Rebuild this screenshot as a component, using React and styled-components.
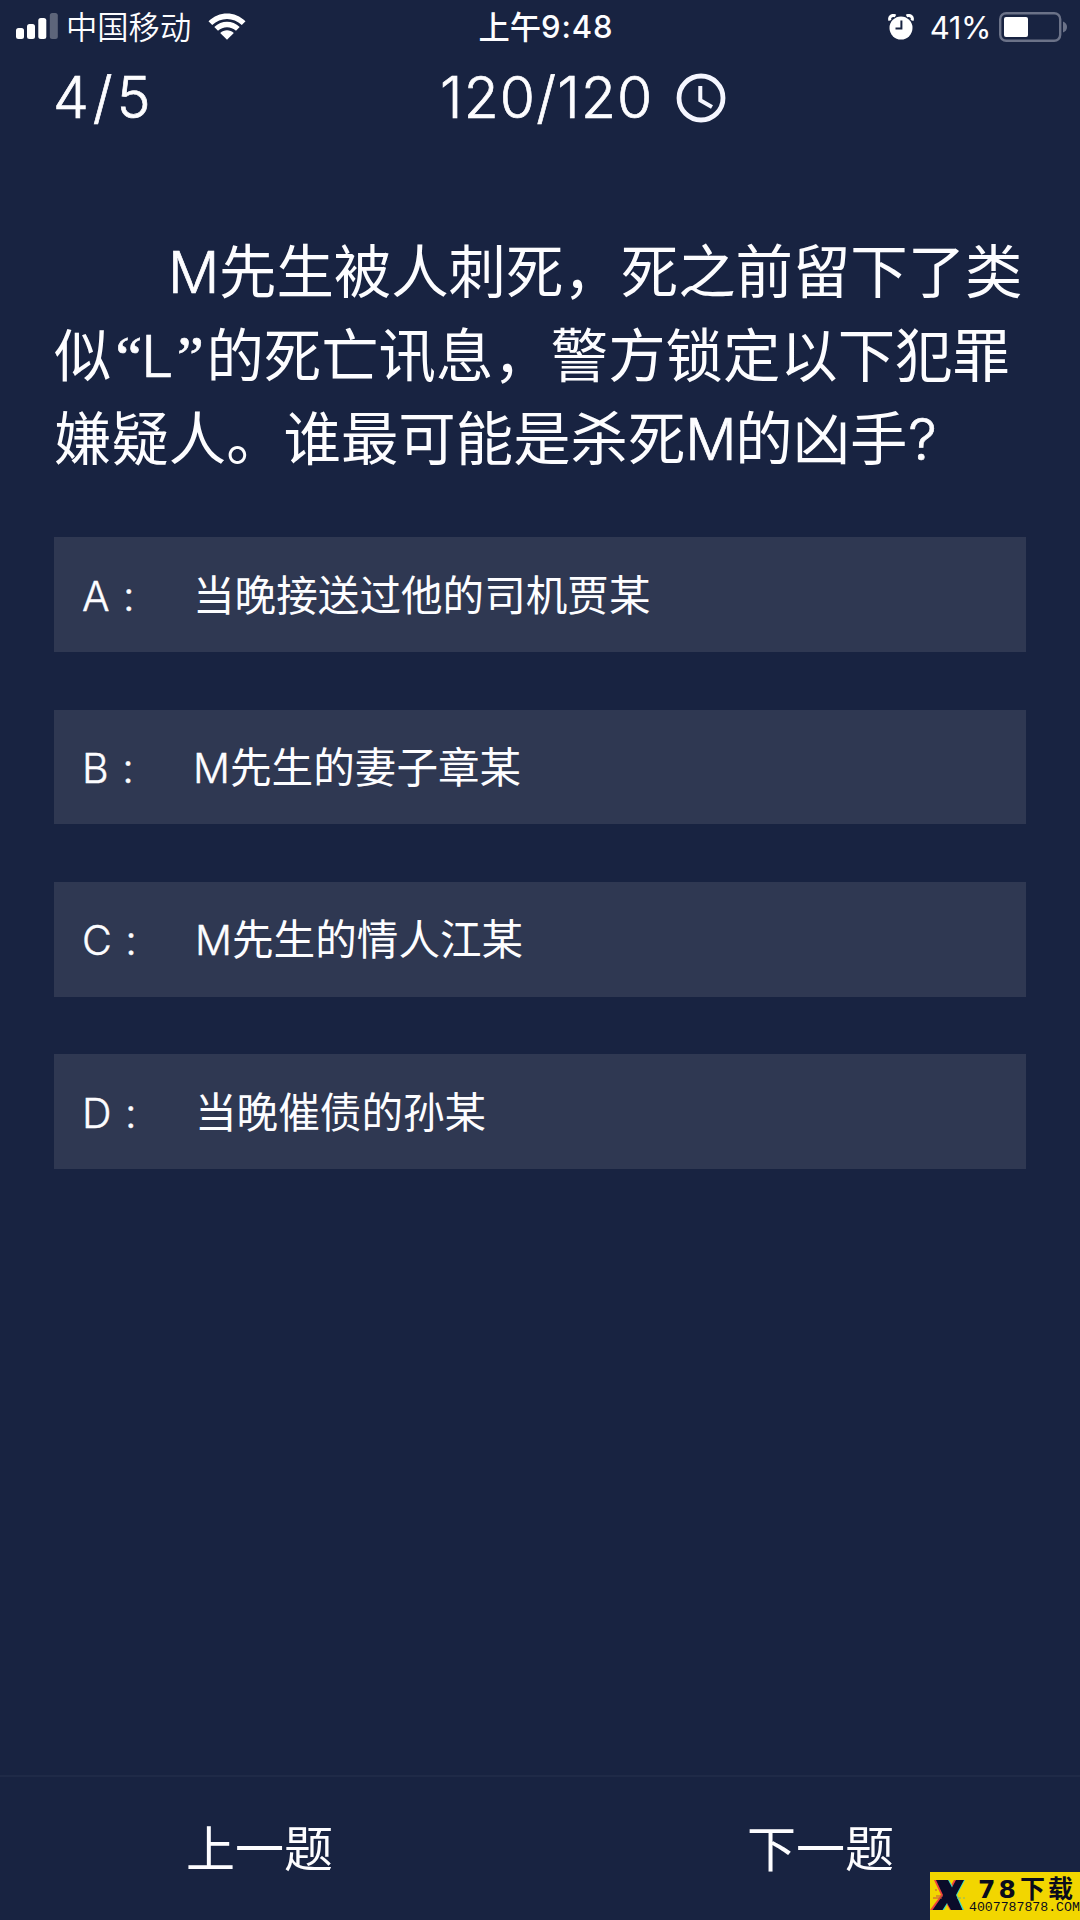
import React from 'react';
import styled, { createGlobalStyle } from 'styled-components';

const latin = `Inter, "Noto Sans CJK SC", sans-serif`;
const cjk = `"Noto Sans CJK SC", sans-serif`;

const GlobalStyle = createGlobalStyle`
  * { box-sizing: border-box; }
  body { margin: 0; background: #182341; }
`;

const Screen = styled.main`
  position: relative;
  display: flex;
  flex-direction: column;
  width: 1080px;
  height: 1920px;
  overflow: hidden;
  background: #182341;
  color: #fdfdff;
  font-family: ${latin};
  font-weight: 400;
`;

const StatusBar = styled.header`
  display: grid;
  grid-template-columns: 1fr auto 1fr;
  align-items: center;
  height: 54px;
  padding: 0 13px 0 16px;
  font-size: 31px;
`;

const StatusGroup = styled.div`
  display: flex;
  align-items: center;
  justify-content: ${(p) => (p.$end ? 'flex-end' : 'flex-start')};
`;

const Carrier = styled.span`
  margin: 0 17px 0 7px;
  padding-bottom: 2px;
  font: 350 31.3px/52px ${cjk};
`;

const Time = styled.time`
  display: flex;
  margin-left: 9px;
  font-weight: 500;
  line-height: 54px;
  letter-spacing: 0.9px;
`;

const TimePrefix = styled.span`
  padding-bottom: 2px;
  font: 500 31.3px/52px ${cjk};
  letter-spacing: 0;
`;

const Percent = styled.span`
  margin: 0 8px 0 16px;
  font-size: 31px;
  font-weight: 400;
  letter-spacing: -0.4px;
`;

const Progress = styled.section`
  display: flex;
  align-items: center;
  height: 87px;
  padding-left: 53px;
  font-size: 57px;
  font-weight: 300;
  line-height: 87px;
  -webkit-text-stroke: 0.7px #fdfdff;
`;

const Counter = styled.span`
  width: 387px;
  letter-spacing: 4px;
`;

const Remaining = styled.span`
  width: 236px;
  letter-spacing: 1.2px;
`;

const Question = styled.h1`
  margin: 86px 54px 0;
  font: 400 57.4px/83.7px ${cjk};
  white-space: nowrap;
`;

const QuestionLine = styled.span`
  display: block;
  height: 83.7px;
  padding-left: ${(p) => (p.$indent ? '114px' : '0')};
`;

const Latin = styled.span`
  display: inline-block;
  width: ${(p) => p.$width}px;
  font-family: ${latin};
  font-size: 57px;
  font-weight: 300;
  line-height: 1;
  text-align: center;
  -webkit-text-stroke: 0.7px #fdfdff;
`;

const Quote = styled(Latin)`
  padding-left: ${(p) => p.$shift || 0}px;
  font-family: "Liberation Serif", serif;
  font-size: 60px;
  font-weight: 400;
`;

const Options = styled.ul`
  display: flex;
  flex-direction: column;
  gap: 57.5px;
  margin: 59.2px 54px 0;
  padding: 0;
  list-style: none;
`;

const Option = styled.li`
  display: flex;
  align-items: baseline;
  height: 114.8px;
  padding: 25.6px 0 0 28px;
  background: #2f3852;
  font: 400 41.6px/60px ${cjk};
  white-space: nowrap;
`;

const Label = styled.span`
  display: flex;
  gap: 13.5px;
  width: ${(p) => p.$width}px;
  font-family: ${latin};
  font-size: 41px;
  font-weight: 300;
  -webkit-text-stroke: 0.4px #fdfdff;
`;

const OptionLatin = styled.span`
  width: 37px;
  font-family: ${latin};
  font-size: 41px;
  font-weight: 300;
  -webkit-text-stroke: 0.4px #fdfdff;
`;

const Footer = styled.nav`
  display: flex;
  align-items: center;
  justify-content: space-between;
  height: 145px;
  margin-top: auto;
  padding: 0 186px 5px;
  border-top: 2px solid #1f2a47;
`;

const NavButton = styled.button`
  padding: 0;
  border: 0;
  background: none;
  color: inherit;
  font: 400 49px/72px ${cjk};
`;

const Watermark = styled.aside`
  position: absolute;
  right: 0;
  bottom: 0;
  display: flex;
  width: 150px;
  height: 48px;
  background: #f2d600;
  color: #0a0c1c;
`;

const Brand = styled.div`
  display: flex;
  flex-direction: column;
  padding-top: 5px;
`;

const BrandName = styled.div`
  display: flex;
  align-items: center;
  height: 24px;
  padding-left: 9px;
  font: 700 25px/23px "Liberation Sans", ${cjk};
  letter-spacing: 3px;
`;

const BrandNumber = styled.span`
  width: 42px;
  font: 700 25px/23px "DejaVu Sans", sans-serif;
  letter-spacing: 3px;
`;

const BrandUrl = styled.div`
  font: 400 13.2px/14px "Liberation Mono", monospace;
  white-space: nowrap;
`;

const SignalIcon = () => (
  <svg width="43" height="28" viewBox="0 0 43 28" fill="#fff">
    <rect x="0" y="15" width="8" height="11" rx="2.5" />
    <rect x="11" y="11" width="8" height="15" rx="2.5" />
    <rect x="22.3" y="5" width="8" height="21" rx="2.5" />
    <rect x="33.8" y="0" width="8" height="26" rx="2.5" opacity="0.3" />
  </svg>
);

const WifiIcon = () => (
  <svg width="38" height="28" viewBox="0 0 38 28" fill="#fff">
    <path d="M0.5 8.2C11-2.2 27-2.2 37.5 8.2L33.8 12C25.5 4 12.500 4 4.200 12Z" />
    <path d="M6.300 14.100C13.500 7 24.500 7 31.700 14.100L28 17.800C23 13 15 13 10 17.800Z" />
    <path d="M12.200 20C16 16.400 22 16.400 25.800 20L19 26.700Z" />
  </svg>
);

const AlarmIcon = () => (
  <svg width="26" height="26" viewBox="0 0 26 26">
    <path d="M2 6.500C.5 3 4 .2 7.500 2M24 6.500C25.500 3 22 .2 18.500 2" fill="none" stroke="#fff" strokeWidth="3" />
    <circle cx="13" cy="14" r="11.500" fill="#fff" />
    <path d="M13.400 6.500V14.500H7.500" fill="none" stroke="#182341" strokeWidth="2" />
  </svg>
);

const BatteryIcon = () => (
  <svg width="68" height="30" viewBox="0 0 68 30">
    <rect x="1.200" y="1.200" width="60" height="27.600" rx="6" fill="none" stroke="#6b7288" strokeWidth="2.400" />
    <rect x="5" y="5" width="24" height="20" rx="2" fill="#fff" />
    <path d="M64 9.500Q68 11 68 15Q68 19 64 20.500Z" fill="#6b7288" />
  </svg>
);

const ClockIcon = () => (
  <svg width="50" height="50" viewBox="0 0 50 50" fill="none" stroke="#f5f6ff">
    <circle cx="25" cy="25" r="22" strokeWidth="4.800" />
    <path d="M24.300 13V27.300L36 34" strokeWidth="4" />
  </svg>
);

const GlitchX = () => (
  <svg width="39" height="48" viewBox="0 0 39 48">
    <path d="M4 8H16L20 15L24 8H33L24 23L31 38H20L16 31L11 38H0L11 23Z" fill="#f0443e" />
    <path d="M8 8H19L23 15L27 8H35L27 23L34 38H22L18 31L14 38H5L14 23Z" fill="#36dcc4" />
    <path d="M6 8H18L22 15.500L26 8H34L26 23L32.500 38H21L17 31L12.500 38H2.500L13 23Z" fill="#0a0c2a" />
    <path d="M3 26H12M6 24H13M5 18H7" stroke="#c8503c" strokeWidth="1.200" />
    <path d="M27 26H31M33 26H35" stroke="#7fb87a" strokeWidth="1.200" />
  </svg>
);

const options = [
  { key: 'A', width: 111, text: '当晚接送过他的司机贾某' },
  { key: 'B', width: 111, latin: 'M', text: '先生的妻子章某' },
  { key: 'C', width: 113, latin: 'M', text: '先生的情人江某' },
  { key: 'D', width: 113, text: '当晚催债的孙某' },
];

export default function App() {
  return (
    <>
      <GlobalStyle />
      <Screen>
        <StatusBar>
          <StatusGroup>
            <SignalIcon />
            <Carrier>中国移动</Carrier>
            <WifiIcon />
          </StatusGroup>
          <Time>
            <TimePrefix>上午</TimePrefix>9:48
          </Time>
          <StatusGroup $end>
            <AlarmIcon />
            <Percent>41%</Percent>
            <BatteryIcon />
          </StatusGroup>
        </StatusBar>
        <Progress>
          <Counter>4/5</Counter>
          <Remaining>120/120</Remaining>
          <ClockIcon />
        </Progress>
        <Question>
          <QuestionLine $indent>
            <Latin $width={51}>M</Latin>先生被人刺死，死之前留下了类
          </QuestionLine>
          <QuestionLine>
            似<Quote $width={29} $shift={4}>“</Quote>
            <Latin $width={34}>L</Latin>
            <Quote $width={32}>”</Quote>的死亡讯息，警方锁定以下犯罪
          </QuestionLine>
          <QuestionLine>
            嫌疑人。谁最可能是杀死<Latin $width={50}>M</Latin>的凶手<Latin $width={30}>?</Latin>
          </QuestionLine>
        </Question>
        <Options>
          {options.map((o) => (
            <Option key={o.key}>
              <Label $width={o.width}>
                <span>{o.key}</span>
                <span>:</span>
              </Label>
              {o.latin && <OptionLatin>{o.latin}</OptionLatin>}
              {o.text}
            </Option>
          ))}
        </Options>
        <Footer>
          <NavButton>上一题</NavButton>
          <NavButton>下一题</NavButton>
        </Footer>
        <Watermark>
          <GlitchX />
          <Brand>
            <BrandName>
              <BrandNumber>78</BrandNumber>下载
            </BrandName>
            <BrandUrl>4007787878.COM</BrandUrl>
          </Brand>
        </Watermark>
      </Screen>
    </>
  );
}
